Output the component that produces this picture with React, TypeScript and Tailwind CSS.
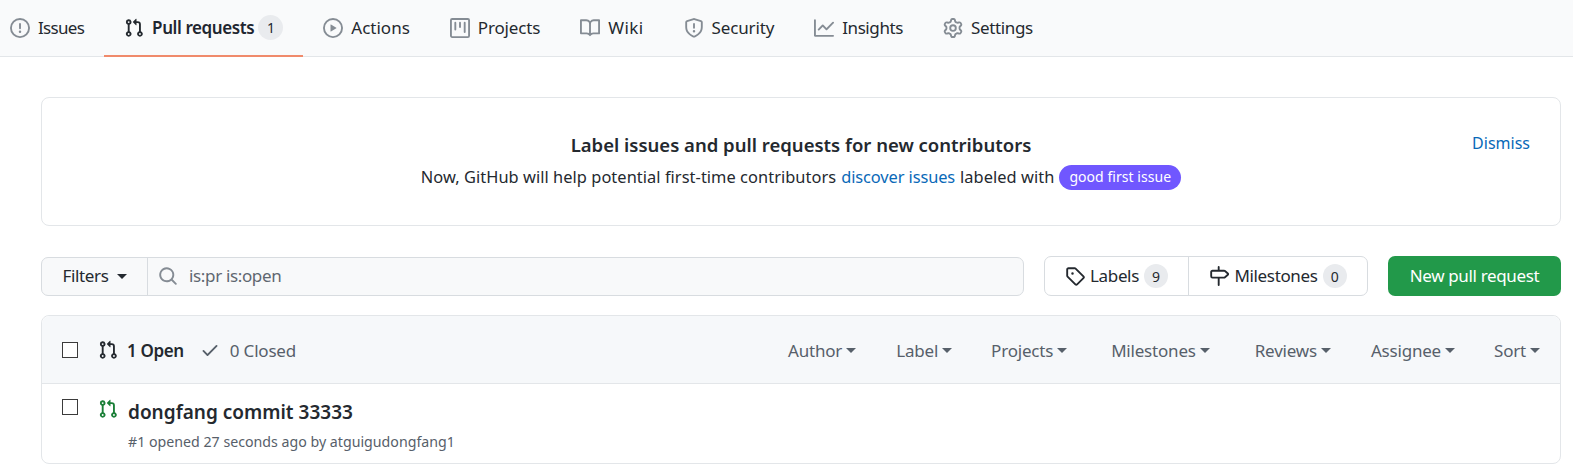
const paths = {
  issue:
    "M8 1.5a6.5 6.5 0 100 13 6.5 6.5 0 000-13zM0 8a8 8 0 1116 0A8 8 0 010 8zm9 3a1 1 0 11-2 0 1 1 0 012 0zm-.25-6.25a.75.75 0 00-1.5 0v3.5a.75.75 0 001.5 0v-3.5z",
  pull: "M7.177 3.073L9.573.677A.25.25 0 0110 .854v4.792a.25.25 0 01-.427.177L7.177 3.427a.25.25 0 010-.354zM3.75 2.5a.75.75 0 100 1.5.75.75 0 000-1.5zm-2.25.75a2.25 2.25 0 113 2.122v5.256a2.251 2.251 0 11-1.5 0V5.372A2.25 2.25 0 011.5 3.25zM11 2.5h-1V4h1a1 1 0 011 1v5.628a2.251 2.251 0 101.5 0V5A2.5 2.5 0 0011 2.5zm1 10.25a.75.75 0 111.5 0 .75.75 0 01-1.5 0zM3.75 12a.75.75 0 100 1.5.75.75 0 000-1.5z",
  play: "M1.5 8a6.5 6.5 0 1113 0 6.5 6.5 0 01-13 0zM8 0a8 8 0 100 16A8 8 0 008 0zM6.379 5.227A.25.25 0 006 5.442v5.117a.25.25 0 00.379.214l4.264-2.559a.25.25 0 000-.428L6.379 5.227z",
  project:
    "M1.75 0A1.75 1.75 0 000 1.75v12.5C0 15.216.784 16 1.75 16h12.5A1.75 1.75 0 0016 14.25V1.75A1.75 1.75 0 0014.25 0H1.75zM1.5 1.75a.25.25 0 01.25-.25h12.5a.25.25 0 01.25.25v12.5a.25.25 0 01-.25.25H1.75a.25.25 0 01-.25-.25V1.75zM11.75 3a.75.75 0 00-.75.75v7.5a.75.75 0 001.5 0v-7.5a.75.75 0 00-.75-.75zm-8.25.75a.75.75 0 011.5 0v5.5a.75.75 0 01-1.5 0v-5.5zM8 3a.75.75 0 00-.75.75v3.5a.75.75 0 001.5 0v-3.5A.75.75 0 008 3z",
  book: "M0 1.75A.75.75 0 01.75 1h4.253c1.227 0 2.317.59 3 1.501A3.744 3.744 0 0111.006 1h4.245a.75.75 0 01.75.75v10.5a.75.75 0 01-.75.75h-4.507a2.25 2.25 0 00-1.591.659l-.622.621a.75.75 0 01-1.06 0l-.622-.621A2.25 2.25 0 005.258 13H.75a.75.75 0 01-.75-.75V1.75zm8.755 3a2.25 2.25 0 012.25-2.25H14.5v9h-3.757c-.71 0-1.4.201-1.992.572l.004-7.322zm-1.504 7.324l.004-5.073-.002-2.253A2.25 2.25 0 005.003 2.5H1.5v9h3.757a3.75 3.75 0 011.994.574z",
  shield:
    "M7.467.133a1.75 1.75 0 011.066 0l5.25 1.68A1.75 1.75 0 0115 3.48V7c0 1.566-.32 3.182-1.303 4.682-.983 1.498-2.585 2.813-5.032 3.855a1.7 1.7 0 01-1.33 0c-2.447-1.042-4.049-2.357-5.032-3.855C1.32 10.182 1 8.566 1 7V3.48a1.75 1.75 0 011.217-1.667l5.25-1.68zm.61 1.429a.25.25 0 00-.153 0l-5.25 1.68a.25.25 0 00-.174.238V7c0 1.358.275 2.666 1.057 3.86.784 1.194 2.121 2.34 4.366 3.297a.2.2 0 00.154 0c2.245-.956 3.582-2.104 4.366-3.298C13.225 9.666 13.5 8.36 13.5 7V3.48a.25.25 0 00-.174-.237l-5.25-1.68zM9 10.5a1 1 0 11-2 0 1 1 0 012 0zm-.25-5.75a.75.75 0 10-1.5 0v3a.75.75 0 001.5 0v-3z",
  graph:
    "M1.5 1.75a.75.75 0 00-1.5 0v12.5c0 .414.336.75.75.75h14.5a.75.75 0 000-1.5H1.5V1.75zm14.28 2.53a.75.75 0 00-1.06-1.06L10 7.94 7.53 5.47a.75.75 0 00-1.06 0L3.22 8.72a.75.75 0 001.06 1.06L7 7.06l2.47 2.47a.75.75 0 001.06 0l5.25-5.25z",
  gear: "M7.429 1.525a6.593 6.593 0 011.142 0c.036.003.108.036.137.146l.289 1.105c.147.56.55.967.997 1.189.174.086.341.183.501.29.417.278.97.423 1.53.27l1.102-.303c.11-.03.175.016.195.046.219.31.41.641.573.989.014.031.022.11-.059.19l-.815.806c-.411.406-.562.957-.53 1.456a4.588 4.588 0 010 .582c-.032.499.119 1.05.53 1.456l.815.806c.08.08.073.159.059.19a6.494 6.494 0 01-.573.99c-.02.029-.086.074-.195.045l-1.103-.303c-.559-.153-1.112-.008-1.529.27-.16.107-.327.204-.5.29-.449.222-.851.628-.998 1.189l-.289 1.105c-.029.11-.101.143-.137.146a6.613 6.613 0 01-1.142 0c-.036-.003-.108-.037-.137-.146l-.289-1.105c-.147-.56-.55-.967-.997-1.189a4.502 4.502 0 01-.501-.29c-.417-.278-.97-.423-1.53-.27l-1.102.303c-.11.03-.175-.016-.195-.046a6.492 6.492 0 01-.573-.989c-.014-.031-.022-.11.059-.19l.815-.806c.411-.406.562-.957.53-1.456a4.587 4.587 0 010-.582c.032-.499-.119-1.05-.53-1.456l-.815-.806c-.08-.08-.073-.159-.059-.19a6.44 6.44 0 01.573-.99c.02-.029.086-.075.195-.045l1.103.303c.559.153 1.112.008 1.529-.27.16-.107.327-.204.5-.29.449-.222.851-.628.998-1.189l.289-1.105c.029-.11.101-.143.137-.146zM8 0c-.236 0-.47.01-.701.03-.743.065-1.29.615-1.458 1.261l-.29 1.106c-.017.066-.078.158-.211.224a5.994 5.994 0 00-.668.386c-.123.082-.233.09-.3.071L3.27 2.776c-.644-.177-1.392.02-1.82.63a7.977 7.977 0 00-.704 1.217c-.315.675-.111 1.422.363 1.891l.815.806c.05.048.098.147.088.294a6.084 6.084 0 000 .772c.01.147-.038.246-.088.294l-.815.806c-.474.469-.678 1.216-.363 1.891.2.428.436.835.704 1.218.428.609 1.176.806 1.82.63l1.103-.303c.066-.019.176-.011.299.071.213.143.436.272.668.386.133.066.194.158.212.224l.289 1.106c.169.646.715 1.196 1.458 1.26a8.094 8.094 0 001.402 0c.743-.064 1.29-.614 1.458-1.26l.29-1.106c.017-.066.078-.158.211-.224a5.98 5.98 0 00.668-.386c.123-.082.233-.09.3-.071l1.102.302c.644.177 1.392-.02 1.82-.63.268-.382.505-.789.704-1.217.315-.675.111-1.422-.364-1.891l-.814-.806c-.05-.048-.098-.147-.088-.294a6.1 6.1 0 000-.772c-.01-.147.039-.246.088-.294l.814-.806c.475-.469.679-1.216.364-1.891a7.992 7.992 0 00-.704-1.218c-.428-.609-1.176-.806-1.82-.63l-1.103.303c-.066.019-.176.011-.299-.071a5.991 5.991 0 00-.668-.386c-.133-.066-.194-.158-.212-.224L10.16 1.29C9.99.645 9.444.095 8.701.031A8.094 8.094 0 008 0zm1.5 8a1.5 1.5 0 11-3 0 1.5 1.5 0 013 0zM11 8a3 3 0 11-6 0 3 3 0 016 0z",
  search:
    "M11.5 7a4.499 4.499 0 11-8.998 0A4.499 4.499 0 0111.5 7zm-.82 4.74a6 6 0 111.06-1.06l3.04 3.04a.75.75 0 11-1.06 1.06l-3.04-3.04z",
  tag: "M2.5 7.775V2.75a.25.25 0 01.25-.25h5.025a.25.25 0 01.177.073l6.25 6.25a.25.25 0 010 .354l-5.025 5.025a.25.25 0 01-.354 0l-6.25-6.25a.25.25 0 01-.073-.177zm-1.5 0V2.75C1 1.784 1.784 1 2.75 1h5.025c.464 0 .91.184 1.238.513l6.25 6.25a1.75 1.75 0 010 2.474l-5.026 5.026a1.75 1.75 0 01-2.474 0l-6.25-6.25A1.75 1.75 0 011 7.775zM6 5a1 1 0 100 2 1 1 0 000-2z",
  milestone:
    "M7.75 0a.75.75 0 01.75.75V3h3.634c.414 0 .814.147 1.13.414l2.07 1.75a1.75 1.75 0 010 2.672l-2.07 1.75a1.75 1.75 0 01-1.13.414H8.5v5.25a.75.75 0 11-1.5 0V10H2.75A1.75 1.75 0 011 8.25v-3.5C1 3.784 1.784 3 2.75 3H7V.75A.75.75 0 017.75 0zm0 8.5h4.384a.25.25 0 00.161-.06l2.07-1.75a.25.25 0 000-.38l-2.07-1.75a.25.25 0 00-.161-.06H2.75a.25.25 0 00-.25.25v3.5c0 .138.112.25.25.25h5z",
  check:
    "M13.78 4.22a.75.75 0 010 1.06l-7.25 7.25a.75.75 0 01-1.06 0L2.22 9.28a.75.75 0 011.06-1.06L6 10.94l6.72-6.72a.75.75 0 011.06 0z",
};

function Octicon({ name, className }: { name: keyof typeof paths; className: string }) {
  return (
    <svg viewBox="0 0 16 16" fill="currentColor" fillRule="evenodd" className={className}>
      <path d={paths[name]} />
    </svg>
  );
}

function Caret({ className = "ml-[4px]" }: { className?: string }) {
  return <span className={`inline-block h-0 w-0 border-x-[5px] border-t-[5px] border-x-transparent border-t-current ${className}`} />;
}

const tabs: { label: string; icon: keyof typeof paths; track: string; count?: string; active?: boolean }[] = [
  { label: "Issues", icon: "issue", track: "tracking-[-0.7px]" },
  { label: "Pull requests", icon: "pull", track: "tracking-[-0.4px]", count: "1", active: true },
  { label: "Actions", icon: "play", track: "tracking-[0px]" },
  { label: "Projects", icon: "project", track: "tracking-[-0.15px]" },
  { label: "Wiki", icon: "book", track: "tracking-[0.4px]" },
  { label: "Security", icon: "shield", track: "tracking-[-0.15px]" },
  { label: "Insights", icon: "graph", track: "tracking-[-0.4px]" },
  { label: "Settings", icon: "gear", track: "tracking-[-0.35px]" },
];

const filters = [
  { label: "Author", gap: "" },
  { label: "Label", gap: "ml-[40px]" },
  { label: "Projects", gap: "ml-[39px]" },
  { label: "Milestones", gap: "ml-[44px]" },
  { label: "Reviews", gap: "ml-[45px]" },
  { label: "Assignee", gap: "ml-[40px]" },
  { label: "Sort", gap: "ml-[39px]" },
];

export default function App() {
  return (
    <div className="h-[473px] overflow-hidden bg-white font-['Noto_Sans','Open_Sans',sans-serif] text-[17px] tracking-[-0.35px] text-[#24292f]">
      <nav className="flex h-[57px] items-center border-b border-[#e3e6e9] bg-[#f9fafb] pl-[10px]">
        {tabs.map((tab, i) => (
          <div
            key={tab.label}
            className={`-mb-px flex h-[57px] items-center gap-[8px] border-b-2 ${
              tab.active ? "border-[#f08a6b] font-semibold text-[#1f2630]" : "border-transparent"
            } ${i === 0 ? "pr-[20px]" : "px-[20px]"}`}
          >
            <Octicon name={tab.icon} className={`size-[20px] ${tab.active ? "text-[#24292f]" : "text-[#858c94]"}`} />
            <span className={tab.track}>{tab.label}</span>
            {tab.count ? (
              <span className="-ml-[4px] flex size-[25px] items-center justify-center rounded-full bg-[#e9ebee] text-[14px] font-normal">
                {tab.count}
              </span>
            ) : null}
          </div>
        ))}
      </nav>

      <main className="pl-[41px] pr-[12px] pt-[40px]">
        <section className="relative flex h-[129px] flex-col items-center rounded-[8px] border border-[#e3e6e9] pt-[33px] tracking-normal">
          <h3 className="text-[18.5px] leading-[28px] font-semibold">Label issues and pull requests for new contributors</h3>
          <p className="mt-[4px] flex items-center text-[16.4px] leading-[28px] tracking-[0.05px]">
            Now, GitHub will help potential first-time contributors
            <span className="mx-[5px] tracking-[-0.1px] text-[#0969b8]">discover issues</span>
            labeled with
            <span className="ml-[5px] flex h-[25px] items-center rounded-full bg-[#7057ff] px-[10px] text-[14px] text-white">
              good first issue
            </span>
          </p>
          <span className="absolute right-[30px] top-[33px] text-[16px] text-[#0969b8]">Dismiss</span>
        </section>

        <div className="mt-[30px] flex h-[40px] items-center">
          <div className="flex h-[39px] flex-1 rounded-[7px] border border-[#d8dce0] bg-[#f8f9fa]">
            <div className="flex w-[106px] items-center justify-center border-r border-[#d8dce0]">
              Filters
              <Caret className="ml-[8px]" />
            </div>
            <div className="flex flex-1 items-center pl-[10px] text-[#5f6770]">
              <Octicon name="search" className="mr-[11px] size-[20px] text-[#858c94]" />
              is:pr is:open
            </div>
          </div>
          <div className="ml-[20px] flex h-[40px] w-[324px] rounded-[7px] border border-[#d8dce0]">
            <div className="flex w-[144px] items-center justify-center gap-[5px] border-r border-[#d8dce0]">
              <Octicon name="tag" className="size-[20px]" />
              Labels
              <span className="flex size-[24px] items-center justify-center rounded-full bg-[#e9ebee] text-[14px]">9</span>
            </div>
            <div className="flex flex-1 items-center justify-center gap-[5px]">
              <Octicon name="milestone" className="size-[20px]" />
              Milestones
              <span className="flex size-[24px] items-center justify-center rounded-full bg-[#e9ebee] text-[14px]">0</span>
            </div>
          </div>
          <div className="ml-[20px] flex h-[40px] w-[173px] items-center justify-center rounded-[7px] bg-[#22994a] text-white">
            New pull request
          </div>
        </div>

        <section className="mt-[19px] rounded-[8px] border border-[#e3e6e9]">
          <div className="flex h-[68px] items-center rounded-t-[8px] border-b border-[#e3e6e9] bg-[#f6f8fa] pl-[20px] pr-[20px]">
            <span className="size-[16px] border border-[#3b3b3b] bg-white" />
            <Octicon name="pull" className="ml-[20px] size-[20px]" />
            <span className="ml-[9px] pt-[2px] font-semibold">1 Open</span>
            <Octicon name="check" className="ml-[16px] size-[20px] text-[#57606a]" />
            <span className="ml-[10px] pt-[2px] tracking-[-0.2px] text-[#57606a]">0 Closed</span>
            <div className="ml-auto flex pt-[2px] tracking-[-0.2px] text-[#57606a]">
              {filters.map((filter) => (
                <span key={filter.label} className={`flex items-center ${filter.gap}`}>
                  {filter.label}
                  <Caret />
                </span>
              ))}
            </div>
          </div>
          <div className="relative h-[79px] pl-[86px] pt-[13px] tracking-normal">
            <span className="absolute left-[20px] top-[15px] size-[16px] border border-[#3b3b3b]" />
            <Octicon name="pull" className="absolute left-[56px] top-[15px] size-[20px] text-[#1a7f37]" />
            <div className="text-[19px] leading-[30px] font-semibold">dongfang commit 33333</div>
            <div className="mt-[5px] text-[14.2px] leading-[20px] text-[#57606a]">#1 opened 27 seconds ago by atguigudongfang1</div>
          </div>
        </section>
      </main>
    </div>
  );
}
